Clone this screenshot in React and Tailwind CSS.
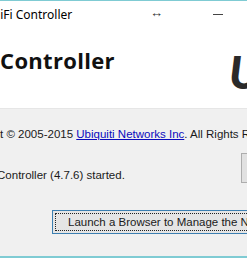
export default function App() {
    return (
        <div className="flex h-[258px] w-[247px] flex-col overflow-hidden bg-white font-['Liberation_Sans',Arial,sans-serif] text-[11.5px] text-[#1a1a1a]">
            <div className="h-px shrink-0 bg-[#7fcbd3]" />

            {/* title bar */}
            <div className="relative flex h-[24px] shrink-0 items-center pt-[3px]">
                <span className="ml-[-16px] whitespace-nowrap font-['Noto_Sans',sans-serif] text-[12px] text-black">UniFi Controller</span>
                <span className="absolute left-[150px] top-[2px] text-[13px] font-bold text-[#333]">↔</span>
                <span className="absolute left-[213px] top-[13px] h-px w-[10px] bg-[#444]" />
            </div>

            {/* header */}
            <div className="flex h-[84px] shrink-0 items-start justify-between border-b border-[#e6e6e6]">
                <div className="ml-[-64px] mt-[23px] whitespace-nowrap font-['Open_Sans',sans-serif] text-[22px] font-bold leading-[24px] tracking-[0.3px] text-[#111]">
                    UniFi Controller
                </div>
                <div className="mr-[-14px] mt-[25px] font-['Lato',sans-serif] text-[46px] font-black italic leading-[44px] text-[#2a2a2a]">
                    U
                </div>
            </div>

            {/* body */}
            <div className="flex flex-1 flex-col bg-[#f0f0f0]">
                <div className="ml-[-46px] mt-[18px] whitespace-nowrap leading-[14px]">
                    Copyright © 2005-2015 <span className="text-[#0b0bbd] underline">Ubiquiti Networks Inc</span>. All Rights Reserved
                </div>

                <div className="mt-[27px] flex items-start justify-between">
                    <span className="ml-[-33px] whitespace-nowrap leading-[14px]">UniFi Controller (4.7.6) started.</span>
                    <span className="mr-[-30px] mt-[-15px] h-[30px] w-[36px] border border-[#adadad] bg-[#e1e1e1]" />
                </div>

                <div className="mt-[27px] flex">
                    <button className="ml-[52px] h-[24px] w-[240px] shrink-0 border border-[#3c7fb1] bg-[#e5e5e5] p-[2px]">
                        <span className="flex h-full w-full items-center whitespace-nowrap border border-dotted border-[#222] pl-[12px] leading-[14px]">
                            Launch a Browser to Manage the Network
                        </span>
                    </button>
                </div>
            </div>

            <div className="h-[2px] shrink-0 bg-[#7fcbd3]" />
        </div>
    );
}
